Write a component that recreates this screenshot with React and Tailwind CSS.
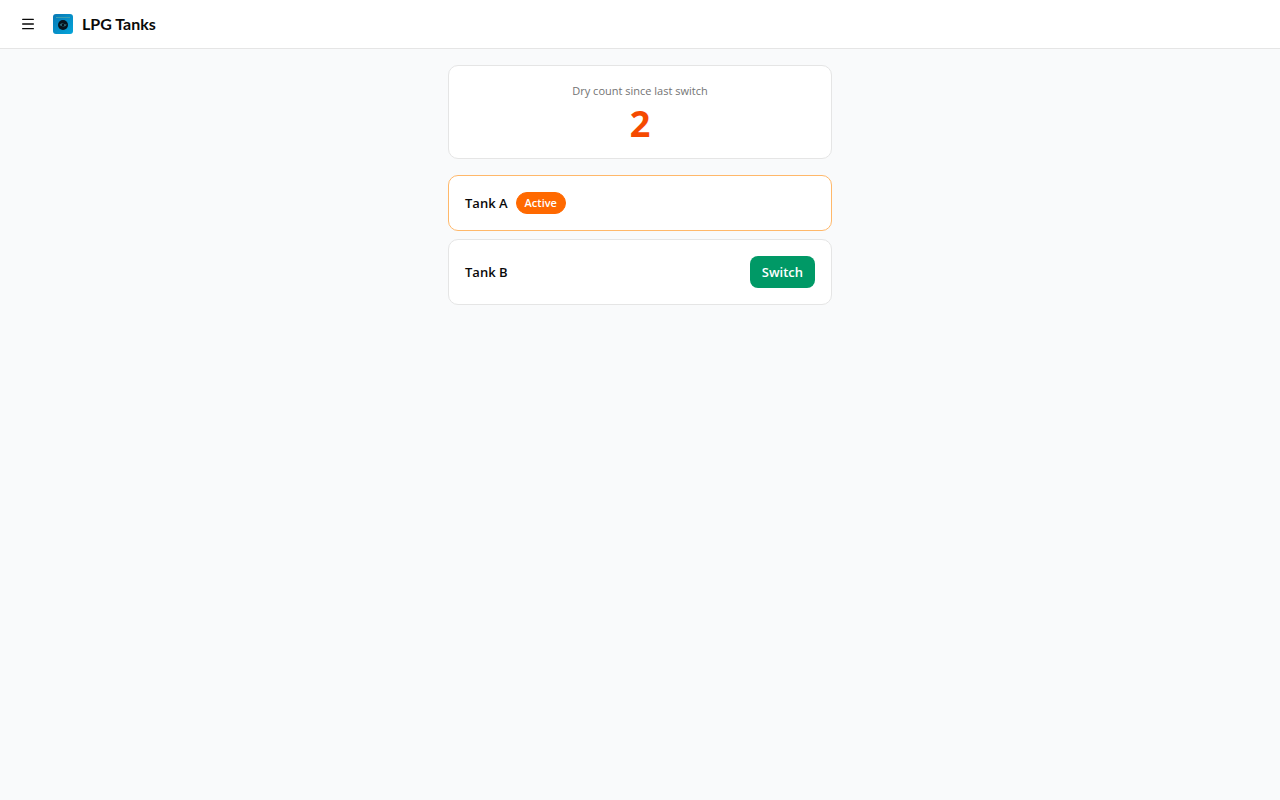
function AppLogo() {
  return (
    <svg viewBox="0 0 20 20" className="size-5 shrink-0" aria-hidden="true">
      <defs>
        <linearGradient id="logo-bg" x1="0" y1="0" x2="1" y2="1">
          <stop offset="0" stopColor="#0878b4" />
          <stop offset="1" stopColor="#04a5da" />
        </linearGradient>
      </defs>
      <rect width="20" height="20" rx="3" fill="url(#logo-bg)" />
      <rect x="3" y="3" width="14" height="1" fill="#3f9eae" />
      <circle cx="10" cy="11" r="5" fill="#07141d" />
      <path d="M6.4 11Q8.2 8.6 10 9.4T13.8 10.6Q12.6 13 10 12.4T6.4 11Z" fill="#2c6a78" />
      <circle cx="10" cy="11" r="1.2" fill="#061018" />
    </svg>
  );
}

function MenuIcon() {
  return (
    <svg
      viewBox="0 0 24 24"
      className="size-4"
      fill="none"
      stroke="currentColor"
      strokeWidth="2"
      strokeLinecap="round"
      aria-hidden="true"
    >
      <path d="M4 5h16M4 12h16M4 19h16" />
    </svg>
  );
}

export default function App() {
  return (
    <div className="min-h-screen bg-gray-50 font-['Open_Sans','Noto_Sans',sans-serif] text-neutral-950">
      <header className="flex items-center gap-[9px] border-b border-neutral-200 bg-white px-3 py-2">
        <button type="button" aria-label="Open menu" className="grid size-8 place-items-center rounded-md">
          <MenuIcon />
        </button>
        <div className="flex items-center gap-[9px]">
          <AppLogo />
          <h1 className="font-['Lato',sans-serif] text-base leading-6 font-bold">LPG Tanks</h1>
        </div>
      </header>

      <main className="mx-auto flex max-w-96 flex-col gap-4 py-4">
        <section className="flex flex-col gap-1.5 rounded-[10px] border border-neutral-200 bg-white p-4 text-center">
          <p className="text-[11px] leading-[18px] text-neutral-500">Dry count since last switch</p>
          <p className="text-4xl leading-9 font-bold text-orange-600">2</p>
        </section>

        <ul className="flex flex-col gap-2">
          <li className="flex items-center justify-between rounded-[10px] border border-orange-300 bg-white p-4">
            <div className="flex items-center gap-2">
              <span className="text-[13px] leading-5 font-semibold">Tank A</span>
              <span className="rounded-full border border-orange-500 bg-orange-500 px-2 py-0.5 text-[11px] leading-4 font-semibold text-white">
                Active
              </span>
            </div>
          </li>
          <li className="flex items-center justify-between rounded-[10px] border border-neutral-200 bg-white p-4">
            <span className="text-[13px] leading-5 font-semibold">Tank B</span>
            <button
              type="button"
              className="h-8 rounded-lg bg-emerald-600 px-3 text-[13px] leading-5 font-semibold text-white"
            >
              Switch
            </button>
          </li>
        </ul>
      </main>
    </div>
  );
}
